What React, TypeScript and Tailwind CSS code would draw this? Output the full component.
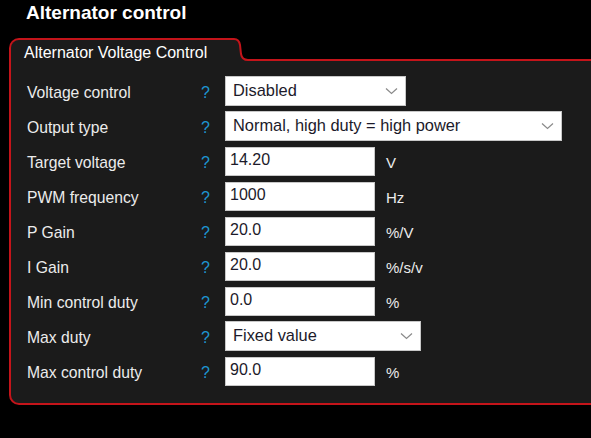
import React from "react";

const Chevron = () => (
  <svg width="13" height="8" viewBox="0 0 13 8" className="shrink-0">
    <path d="M1 1.5 L6.5 6.5 L12 1.5" fill="none" stroke="#8a8a8a" strokeWidth="1.2" />
  </svg>
);

type Row = {
  label: string;
  kind: "select" | "input";
  value: string;
  width: string;
  unit?: string;
};

const rows: Row[] = [
  { label: "Voltage control", kind: "select", value: "Disabled", width: "w-[181px]" },
  { label: "Output type", kind: "select", value: "Normal, high duty = high power", width: "w-[337px]" },
  { label: "Target voltage", kind: "input", value: "14.20", width: "w-[150px]", unit: "V" },
  { label: "PWM frequency", kind: "input", value: "1000", width: "w-[150px]", unit: "Hz" },
  { label: "P Gain", kind: "input", value: "20.0", width: "w-[150px]", unit: "%/V" },
  { label: "I Gain", kind: "input", value: "20.0", width: "w-[150px]", unit: "%/s/v" },
  { label: "Min control duty", kind: "input", value: "0.0", width: "w-[150px]", unit: "%" },
  { label: "Max duty", kind: "select", value: "Fixed value", width: "w-[196px]" },
  { label: "Max control duty", kind: "input", value: "90.0", width: "w-[150px]", unit: "%" },
];

export default function App() {
  return (
    <div
      className="w-[591px] h-[438px] bg-black overflow-hidden text-[#ececec]"
      style={{ fontFamily: '"Liberation Sans", Arial, sans-serif' }}
    >
      <div className="h-[38px] pl-[26px] pt-[2px] text-[19px] font-bold leading-[22px] text-white">
        Alternator control
      </div>
      <div className="ml-[9px]">
        {/* tab row */}
        <div className="flex h-[24px]">
          <div className="w-[222px] h-[24px] bg-[#1b1b1b] border-t-2 border-l-2 border-[#c4141a] rounded-tl-[10px] pl-[13px] pt-[3px] text-[16px] leading-[20px] text-white">
            Alternator Voltage Control
          </div>
          <svg width="22" height="24" viewBox="0 0 22 24" className="shrink-0 block">
            <path d="M0 1 L3 1 Q8 1 9 7 L10 16 Q11 22 17 22 L22 22 L22 24 L0 24 Z" fill="#1b1b1b" />
            <path d="M0 1 L3 1 Q8 1 9 7 L10 16 Q11 22 17 22 L22 22" fill="none" stroke="#c4141a" strokeWidth="2" />
          </svg>
          <div className="flex-1 h-[24px] bg-black">
            <div className="h-[21px]" />
            <div className="h-[2px] bg-[#c4141a]" />
            <div className="h-[1px] bg-[#1b1b1b]" />
          </div>
        </div>
        {/* body */}
        <div className="bg-[#1b1b1b] border-l-2 border-b-2 border-[#c4141a] rounded-bl-[10px] pl-[16px] pt-[14px] pb-[17px] flex flex-col gap-[5px]">
          {rows.map((r) => (
            <div key={r.label} className="flex items-center h-[30px]">
              <div className="w-[174px] text-[15.7px] leading-[18px] pt-[3px] text-[#ececec]">{r.label}</div>
              <div className="w-[24px] text-[16px] text-[#1e96d2] leading-[18px] pt-[4px]">?</div>
              {r.kind === "select" ? (
                <div
                  className={`${r.width} h-[30px] bg-white border border-[#c8c8c8] flex items-center justify-between pl-[7px] pr-[7px] text-[16.4px] text-[#1c1a2a]`}
                >
                  <span className="leading-[18px] pb-[2px]">{r.value}</span>
                  <Chevron />
                </div>
              ) : (
                <>
                  <div
                    className={`${r.width} h-[29px] bg-white border border-[#c8c8c8] flex items-center pl-[4px] text-[16px] text-[#1c1a2a]`}
                  >
                    <span className="leading-[18px] pb-[3px]">{r.value}</span>
                  </div>
                  <div className="ml-[11px] text-[15px] text-[#ececec] leading-[18px] pt-[3px]">{r.unit}</div>
                </>
              )}
            </div>
          ))}
        </div>
      </div>
    </div>
  );
}
